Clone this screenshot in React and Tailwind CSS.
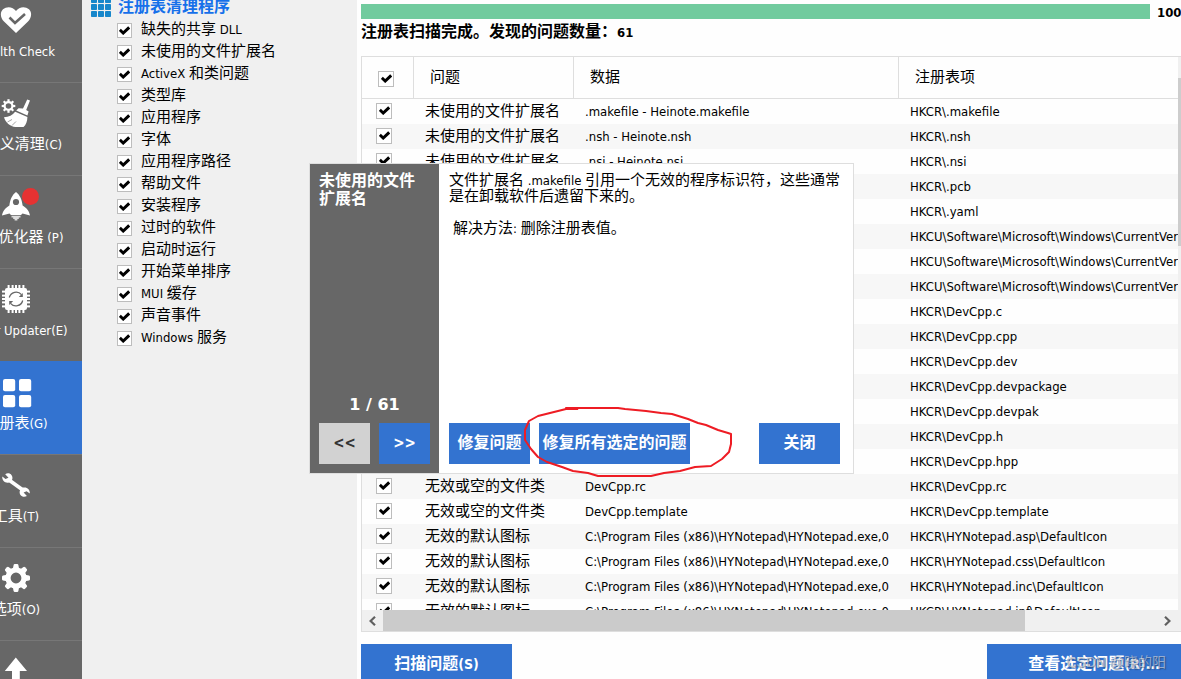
import React from "react";

const CJK_RUN = /([\u2e80-\u9fff\uff00-\uffef]+)/;

/* Sets Chinese runs slightly larger than the Latin text around them. */
function Mixed({ text, bold }) {
  return text.split(CJK_RUN).map((part, i) =>
    i % 2 === 1 ? (
      <span
        key={i}
        className={
          bold
            ? "text-[16px] leading-3 font-bold font-['Noto_Sans_CJK_SC',sans-serif]"
            : "text-[15px] leading-3 font-normal font-['Noto_Sans_CJK_SC',sans-serif]"
        }
      >
        {part}
      </span>
    ) : (
      part
    )
  );
}

function Tick({ label, large }) {
  return (
    <span className="inline-grid shrink-0 place-items-center">
      <input
        type="checkbox"
        defaultChecked
        aria-label={label}
        className={
          "peer col-start-1 row-start-1 appearance-none border border-[#bdbdbd] bg-white " +
          (large ? "size-4" : "size-[15px]")
        }
      />
      <svg
        viewBox="0 0 11 9"
        className="pointer-events-none invisible col-start-1 row-start-1 h-[9px] w-[11px] peer-checked:visible"
        aria-hidden="true"
      >
        <path d="M0.8 3.8 L4.2 7 L10.2 1.4" fill="none" stroke="#000" strokeWidth="3" />
      </svg>
    </span>
  );
}

const gearTeeth = [0, 45, 90, 135, 180, 225, 270, 315];

function IconBox({ children }) {
  return (
    <svg viewBox="0 0 28 28" className="size-7 overflow-visible fill-white" aria-hidden="true">
      {children}
    </svg>
  );
}

const HeartIcon = () => (
  <IconBox>
    <path d="M14 27 L2 15.5 C-2 11.5 -2 6 1 3.3 C5 -0.2 11 0.8 14 5 C17 0.8 23 -0.2 27 3.3 C30 6 30 11.5 26 15.5 Z" />
    <path d="M7.5 11.5 L13 17 L23 8" fill="none" stroke="#676767" strokeWidth="2.6" />
  </IconBox>
);

const BroomIcon = () => (
  <IconBox>
    <circle cx="6.5" cy="7" r="3.9" fill="none" stroke="#fff" strokeWidth="2.2" />
    {gearTeeth.map((a) => (
      <rect key={a} x="5.4" y="0.2" width="2.2" height="2.6" transform={`rotate(${a} 6.5 7)`} />
    ))}
    <path d="M25.2 0.4 L28 1.6 L24.2 11 L26.6 12.6 L25.4 16.4 L14.2 11.6 L16.6 9.2 L21 9.6 Z" />
    <path d="M13.2 12.8 L25.4 18 C25.4 22 24 26 21.5 28 L13.5 28 C8 27.4 3.6 23.5 2 18.2 C7 18.2 10.5 16.4 13.2 12.8 Z" />
    <path d="M5.5 23 L10 20.5 M10 26.5 L14 22.5" stroke="#676767" strokeWidth="0.6" />
  </IconBox>
);

const RocketIcon = () => (
  <IconBox>
    <path d="M14 0 C18 3 20 8 20.6 13.5 C24.5 16 27.4 19 28 23.5 L20.5 21.5 L19 23 L9 23 L7.5 21.5 L0 23.5 C0.6 19 3.5 16 7.4 13.5 C8 8 10 3 14 0 Z" />
    <circle cx="14" cy="10" r="3.1" fill="#676767" />
    <path d="M9.5 23.8 H18.5 V25.5 H16.8 V27 H15.4 V28.6 H12.6 V27 H11.2 V25.5 H9.5 Z" fill="#dcdcdc" />
  </IconBox>
);

const ChipIcon = () => (
  <IconBox>
    <rect x="3" y="3" width="22" height="22" rx="2" />
    {[5.6, 9.6, 13, 16.4, 20.4].map((p) => (
      <g key={p}>
        <rect x={p} y="0" width="2" height="28" />
        <rect x="0" y={p} width="28" height="2" />
      </g>
    ))}
    <path
      d="M7.3 12.5 A7 7 0 0 1 19.5 9.6 M20.7 15.5 A7 7 0 0 1 8.5 18.4"
      fill="none"
      stroke="#676767"
      strokeWidth="1.3"
    />
    <path d="M20.8 8 V12 H16.8 Z M7.2 20 V16 H11.2 Z" fill="#676767" />
  </IconBox>
);

const TilesIcon = () => (
  <IconBox>
    <rect x="1" y="1" width="12.2" height="12.2" rx="2" />
    <rect x="17" y="1" width="12.2" height="12.2" rx="2" />
    <rect x="1" y="17" width="12.2" height="12.2" rx="2" />
    <rect x="17" y="17" width="12.2" height="12.2" rx="2" />
  </IconBox>
);

const WrenchIcon = () => (
  <IconBox>
    <path d="M7 9 L21.5 19.5" stroke="#fff" strokeWidth="3.8" />
    <path d="M3.2 3.2 L6.5 6.8 L3.5 8 L0.3 5.6 C-0.2 10 3.5 12.6 7 11.6 C10.3 10.4 11.4 6.8 9.6 4.2 C8.2 2.2 5.4 1.8 3.2 3.2 Z" />
    <path d="M24.9 25 L21.6 21.4 L24.6 20.2 L27.8 22.6 C28.3 18.2 24.6 15.6 21.1 16.6 C17.8 17.8 16.7 21.4 18.5 24 C19.9 26 22.7 26.4 24.9 25 Z" />
  </IconBox>
);

const GearIcon = () => (
  <IconBox>
    <circle cx="14" cy="14" r="8" fill="none" stroke="#fff" strokeWidth="5.2" />
    {gearTeeth.map((a) => (
      <path
        key={a}
        d="M10.8 5.2 L11.6 1 Q11.8 0 12.8 0 H15.2 Q16.2 0 16.4 1 L17.2 5.2 Z"
        transform={`rotate(${a} 14 14)`}
      />
    ))}
  </IconBox>
);

const ArrowIcon = () => (
  <IconBox>
    <path d="M13.8 0.5 L25 14 H17.8 V28 H10 V14 H2.8 Z" />
  </IconBox>
);

const NAV = [
  { label: "Health Check", Icon: HeartIcon },
  { label: "自定义清理(C)", Icon: BroomIcon },
  { label: "性能优化器 (P)", Icon: RocketIcon, badge: true },
  { label: "Driver Updater(E)", Icon: ChipIcon },
  { label: "注册表(G)", Icon: TilesIcon, active: true },
  { label: "工具(T)", Icon: WrenchIcon },
  { label: "选项(O)", Icon: GearIcon },
  { label: "升级", Icon: ArrowIcon },
];

function Sidebar() {
  return (
    <nav className="flex w-[82px] shrink-0 justify-end overflow-hidden bg-[#676767]">
      <div className="-mt-[11px] w-[132px] shrink-0">
        {NAV.map(({ label, Icon, badge, active }) => (
          <button
            key={label}
            type="button"
            className={
              "flex h-[93px] w-full flex-col items-center gap-2 border-t pt-4 leading-5 whitespace-nowrap text-white " +
              (active ? "border-[#3373d0] bg-[#3373d0]" : "border-[#777777]")
            }
          >
            <span className="relative">
              <Icon />
              {badge && (
                <span className="absolute -top-1 -right-[9px] size-[17px] rounded-full bg-[#e63232]" />
              )}
            </span>
            <span>
              <Mixed text={label} />
            </span>
          </button>
        ))}
      </div>
    </nav>
  );
}

const CATEGORIES = [
  "缺失的共享 DLL",
  "未使用的文件扩展名",
  "ActiveX 和类问题",
  "类型库",
  "应用程序",
  "字体",
  "应用程序路径",
  "帮助文件",
  "安装程序",
  "过时的软件",
  "启动时运行",
  "开始菜单排序",
  "MUI 缓存",
  "声音事件",
  "Windows 服务",
];

function Categories() {
  return (
    <section className="w-[275px] shrink-0 bg-[#f0f0f0] pl-[9px]">
      <h2 className="flex h-[19px] items-start gap-[7px] text-[#1670ea]">
        <svg viewBox="0 0 20 20" className="-mt-[3px] size-5 fill-[#1787cb]" aria-hidden="true">
          {[0, 7, 14].map((y) =>
            [0, 7, 14].map((x) => <rect key={x + "-" + y} x={x} y={y} width="6" height="6" rx="0.8" />)
          )}
        </svg>
        <span className="-mt-0.5 leading-5">
          <Mixed text="注册表清理程序" bold />
        </span>
      </h2>
      <ul className="pl-[26px]">
        {CATEGORIES.map((name) => (
          <li key={name}>
            <label className="flex h-[22px] items-center gap-[9px] leading-[22px]">
              <Tick />
              <span>
                <Mixed text={name} />
              </span>
            </label>
          </li>
        ))}
      </ul>
    </section>
  );
}

const EXT = "未使用的文件扩展名";
const CLS = "无效或空的文件类";
const ICO = "无效的默认图标";
const RUN = "启动时运行";
const RUN_KEY = "HKCU\\Software\\Microsoft\\Windows\\CurrentVersion\\Run";
const NOTEPAD = "C:\\Program Files (x86)\\HYNotepad\\HYNotepad.exe,0";

const ROWS = [
  [EXT, ".makefile - Heinote.makefile", "HKCR\\.makefile"],
  [EXT, ".nsh - Heinote.nsh", "HKCR\\.nsh"],
  [EXT, ".nsi - Heinote.nsi", "HKCR\\.nsi"],
  [EXT, "", "HKCR\\.pcb"],
  [EXT, "", "HKCR\\.yaml"],
  [RUN, "", RUN_KEY],
  [RUN, "", RUN_KEY],
  [RUN, "", RUN_KEY],
  [CLS, "", "HKCR\\DevCpp.c"],
  [CLS, "", "HKCR\\DevCpp.cpp"],
  [CLS, "", "HKCR\\DevCpp.dev"],
  [CLS, "", "HKCR\\DevCpp.devpackage"],
  [CLS, "", "HKCR\\DevCpp.devpak"],
  [CLS, "", "HKCR\\DevCpp.h"],
  [CLS, "", "HKCR\\DevCpp.hpp"],
  [CLS, "DevCpp.rc", "HKCR\\DevCpp.rc"],
  [CLS, "DevCpp.template", "HKCR\\DevCpp.template"],
  [ICO, NOTEPAD, "HKCR\\HYNotepad.asp\\DefaultIcon"],
  [ICO, NOTEPAD, "HKCR\\HYNotepad.css\\DefaultIcon"],
  [ICO, NOTEPAD, "HKCR\\HYNotepad.inc\\DefaultIcon"],
  [ICO, NOTEPAD, "HKCR\\HYNotepad.inf\\DefaultIcon"],
];

function Issues() {
  return (
    <div className="flex min-h-0 flex-1 flex-col border-y border-l border-[#dedede]">
      <div className="flex min-h-0 flex-1">
        <div className="min-w-0 flex-1 overflow-hidden">
          <table className="w-full table-fixed border-separate border-spacing-0 text-left whitespace-nowrap">
            <colgroup>
              <col className="w-[52px]" />
              <col className="w-40" />
              <col className="w-[325px]" />
              <col />
            </colgroup>
            <thead>
              <tr className="h-[42px]">
                <th className="border-r border-b border-[#dedede] p-0 pl-4 font-normal">
                  <span className="flex pt-0.5">
                    <Tick large label="全选" />
                  </span>
                </th>
                <th className="border-r border-b border-[#dedede] p-0 pl-4 font-normal">
                  <Mixed text="问题" />
                </th>
                <th className="border-r border-b border-[#dedede] p-0 pl-4 font-normal">
                  <Mixed text="数据" />
                </th>
                <th className="border-b border-[#dedede] p-0 pl-4 font-normal">
                  <Mixed text="注册表项" />
                </th>
              </tr>
            </thead>
            <tbody>
              {ROWS.map(([issue, data, key], i) => (
                <tr key={i} className="h-[25px] leading-6 even:bg-[#f7f7f7]">
                  <td className="p-0 pl-[14px]">
                    <span className="flex pb-0.5">
                      <Tick large label={key} />
                    </span>
                  </td>
                  <td className="p-0 pl-[11px]">
                    <Mixed text={issue} />
                  </td>
                  <td className="p-0 pl-[11px]">{data}</td>
                  <td className="overflow-hidden p-0 pl-[11px]">{key}</td>
                </tr>
              ))}
            </tbody>
          </table>
        </div>
        <div className="w-[3px] shrink-0 bg-[#f0f0f0] pt-[21px]">
          <div className="h-[168px] bg-[#cdcdcd]" />
        </div>
      </div>
      <div className="flex h-[21px] shrink-0 items-stretch bg-[#f0f0f0]">
        <button type="button" aria-label="向左滚动" className="grid w-[21px] place-items-center">
          <svg viewBox="0 0 8 10" className="h-[10px] w-2" aria-hidden="true">
            <path d="M6 0.8 L1.6 5 L6 9.2" fill="none" stroke="#606060" strokeWidth="2.2" />
          </svg>
        </button>
        <div className="flex-1">
          <div className="h-full w-[83%] bg-[#cbcbcb]" />
        </div>
        <button type="button" aria-label="向右滚动" className="grid w-[25px] place-items-center pr-1">
          <svg viewBox="0 0 8 10" className="h-[10px] w-2" aria-hidden="true">
            <path d="M2 0.8 L6.4 5 L2 9.2" fill="none" stroke="#606060" strokeWidth="2.2" />
          </svg>
        </button>
      </div>
    </div>
  );
}

function BlueButton({ text, className }) {
  return (
    <button
      type="button"
      className={"h-[41px] bg-[#3373d0] text-[14px] font-bold whitespace-nowrap text-white " + className}
    >
      <Mixed text={text} bold />
    </button>
  );
}

function DetailDialog() {
  return (
    <div
      role="dialog"
      aria-label={EXT}
      className="absolute top-[163px] left-[309px] flex h-[311px] w-[545px] border border-[#dedede] bg-white"
    >
      <div className="flex w-[129px] shrink-0 flex-col bg-[#676767] p-[9px] text-white">
        <h3 className="leading-[18px]">
          <Mixed text={EXT} bold />
        </h3>
        <p className="mt-auto mb-1.5 text-center font-['DejaVu_Sans',sans-serif] text-[16px] leading-6 font-bold">
          1 / 61
        </p>
        <div className="flex gap-[9px] text-[15px] font-bold">
          <button type="button" className="h-[41px] flex-1 bg-[#d2d2d2] text-[#333333]">
            &lt;&lt;
          </button>
          <button type="button" className="h-[41px] flex-1 bg-[#3373d0]">
            &gt;&gt;
          </button>
        </div>
      </div>
      <div className="flex flex-1 flex-col py-[9px] pr-[13px] pl-[10px]">
        <p className="-mr-2 leading-4">
          <Mixed text="文件扩展名 .makefile 引用一个无效的程序标识符，这些通常是在卸载软件后遗留下来的。" />
        </p>
        <p className="mt-4 pl-1 leading-4">
          <Mixed text="解决方法: 删除注册表值。" />
        </p>
        <div className="mt-auto flex gap-[9px]">
          <BlueButton text="修复问题" className="w-[81px]" />
          <BlueButton text="修复所有选定的问题" className="w-[151px]" />
          <BlueButton text="关闭" className="ml-auto w-[81px]" />
        </div>
      </div>
    </div>
  );
}

function RedCircle() {
  return (
    <svg
      viewBox="520 400 220 84"
      className="pointer-events-none absolute top-[400px] left-[520px] h-[84px] w-[220px]"
      fill="none"
      stroke="#ee1c24"
      strokeWidth="2"
      strokeLinecap="round"
      strokeLinejoin="round"
      aria-hidden="true"
    >
      <path d="M577 409 L566 408 L618 408 L625 409 L646 411 L661 413 L672 414 L688 419 L698 423 L706 425 L718 430 L728 433 L731 434 L731 444 L729 452 L722 459 L711 466 L695 467 L680 471 L664 473 L651 476 L598 476 L588 473 L573 471 L562 467 L547 462 L538 457 L531 449 L525 440 L525 430 L529 421 L538 416 L550 413 L566 409 L577 409" />
      <path d="M567 408.5 H577" strokeWidth="3" />
    </svg>
  );
}

export default function App() {
  return (
    <div className="relative flex h-screen overflow-hidden bg-[#fefefe] font-['DejaVu_Sans_Condensed','DejaVu_Sans',sans-serif] text-[13px] text-black">
      <Sidebar />
      <Categories />
      <main className="flex min-w-0 flex-1 flex-col pt-1 pl-1">
        <div className="flex h-[15px] items-center gap-[7px]">
          <div className="h-full flex-1 bg-[#71cb9e]" />
          <span className="w-6 pt-0.5 font-bold">100%</span>
        </div>
        <p className="mt-1 mb-[13px] h-5 leading-5 font-bold">
          <Mixed text="注册表扫描完成。发现的问题数量：61" bold />
        </p>
        <Issues />
        <div className="mt-3 flex h-[35px] shrink-0 justify-between overflow-hidden">
          <BlueButton text="扫描问题(S)" className="w-[151px]" />
          <BlueButton text="查看选定问题(R)..." className="w-[194px] pl-5" />
        </div>
      </main>
      <DetailDialog />
      <RedCircle />
      <span className="pointer-events-none absolute right-[15px] bottom-[7px] font-['Liberation_Sans','Noto_Sans_CJK_SC',sans-serif] text-[14px] leading-5 text-[#c4cad4]/70 [text-shadow:1px_1px_1px_rgb(40_50_70/0.5)]">
        CSDN @晓的阳
      </span>
    </div>
  );
}
